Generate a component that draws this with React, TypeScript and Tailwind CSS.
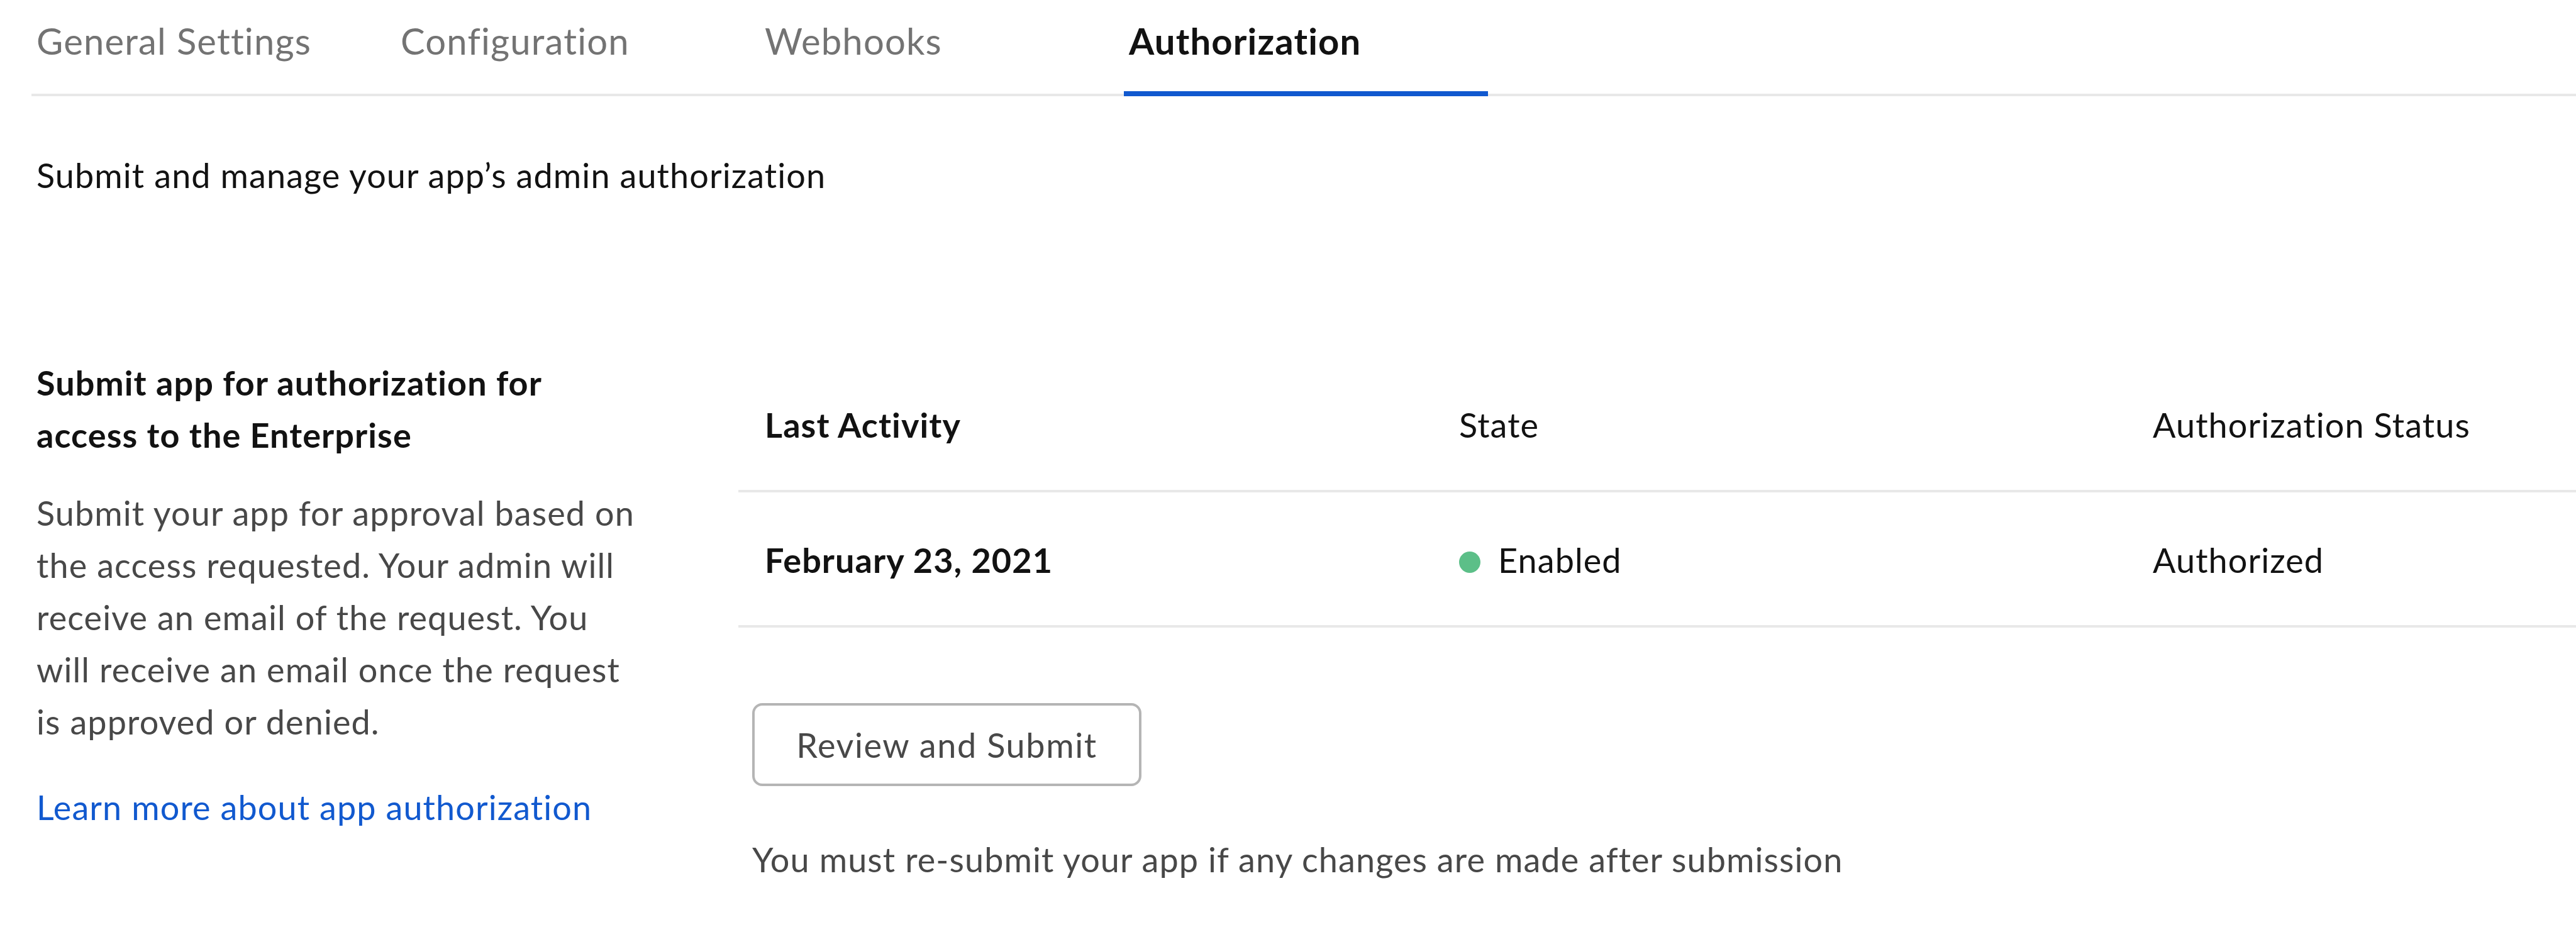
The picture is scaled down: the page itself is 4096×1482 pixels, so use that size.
const TABS = ["General Settings", "Configuration", "Webhooks"];

export default function App() {
  return (
    <div className="bg-white pl-[50px] font-['Lato',sans-serif] text-[54px] leading-[83px] tracking-[0.02em] text-[#121212]">
      <nav className="flex h-[153px] border-b-4 border-[#e8e8e8] text-[58px] text-[#737373]">
        {TABS.map((tab) => (
          <button key={tab} type="button" className="w-[579px] pl-2 pb-5 text-left tracking-[0.02em]">
            {tab}
          </button>
        ))}
        <button
          type="button"
          aria-current="page"
          className="-mb-1 w-[579px] border-b-8 border-[#1159cf] pl-2 pb-4 text-left font-bold tracking-[0.02em] text-[#121212]"
        >
          Authorization
        </button>
      </nav>
      <p className="mt-[84px] pl-2">Submit and manage your app’s admin authorization</p>
      <div className="mt-[247px] flex">
        <aside className="w-[1124px] shrink-0 pl-2">
          <h2 className="w-[900px] font-bold">Submit app for authorization for access to the Enterprise</h2>
          <p className="mt-[41px] w-[970px] text-[#484848]">
            Submit your app for approval based on the access requested. Your admin will receive an email of the
            request. You will receive an email once the request is approved or denied.
          </p>
          <a href="#" className="mt-[53px] block text-[#1159cf]">
            Learn more about app authorization
          </a>
        </aside>
        <main className="grow">
          <table className="w-full table-fixed text-left">
            <thead>
              <tr className="h-[214px] border-b-4 border-[#e8e8e8]">
                <th className="w-[1103px] pt-1 pl-[42px] font-bold">Last Activity</th>
                <th className="w-[1103px] pt-1 pl-[43px] font-normal">State</th>
                <th className="pt-1 pl-[43px] font-normal">Authorization Status</th>
              </tr>
            </thead>
            <tbody>
              <tr className="h-[215px] border-b-4 border-[#e8e8e8]">
                <td className="pt-1 pl-[42px] font-bold">February 23, 2021</td>
                <td className="pt-1 pl-[43px]">
                  <span className="mr-7 inline-block size-[34px] rounded-full bg-[#5cbf88]" />
                  Enabled
                </td>
                <td className="pt-1 pl-[43px]">Authorized</td>
              </tr>
            </tbody>
          </table>
          <button
            type="button"
            className="mt-[120px] ml-[22px] h-[132px] w-[619px] rounded-[16px] border-4 border-[#b5b5b5] tracking-[0.03em] text-[#484848]"
          >
            Review and Submit
          </button>
          <p className="mt-[75px] pl-[22px] text-[#484848]">
            You must re-submit your app if any changes are made after submission
          </p>
        </main>
      </div>
    </div>
  );
}
